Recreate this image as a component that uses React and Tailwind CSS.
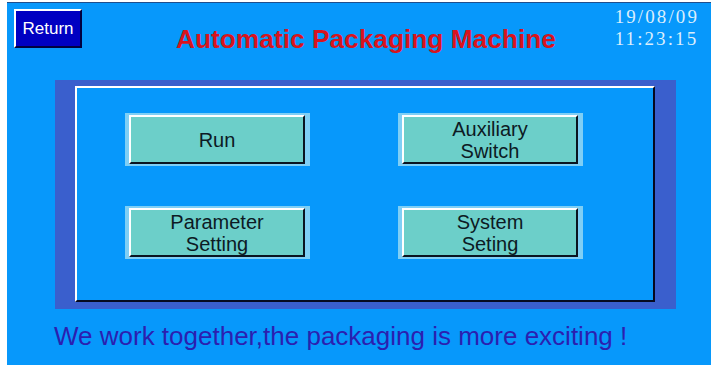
const ARIAL = { fontFamily: '"Liberation Sans", Arial, sans-serif' }

function PanelButton({ lines }) {
  return (
    <div className="w-[185px] h-[53px] bg-[#7fcff5] pl-[4px] pt-[2px] pr-[5px] pb-[2px]">
      <div className="w-full h-full bg-[#6ccfc9] border-t-2 border-l-2 border-t-white border-l-white border-b-2 border-r-2 border-b-[#0a1420] border-r-[#0a1420] flex flex-col items-center justify-center text-[20px] leading-[22px] text-[#0d1a24]">
        {lines.map(l => (
          <span key={l}>{l}</span>
        ))}
      </div>
    </div>
  )
}

export default function App() {
  return (
    <div className="w-[720px] h-[371px] bg-white pl-[7px] pt-[2px]" style={ARIAL}>
      <div className="w-[704px] h-[363px] bg-[#0798fb] border-t border-[#1f4e8c]">
        {/* header */}
        <div className="flex items-start h-[77px]">
          <div className="ml-[7px] mt-[6px] w-[68px] h-[39px] bg-[#0000c2] border-t-2 border-l-2 border-t-white border-l-white border-b-2 border-r-2 border-b-[#000040] border-r-[#000040] flex items-center justify-center text-white text-[17px]">
            Return
          </div>
          <div className="ml-[94px] mt-[21px] text-[26.3px] leading-[30px] font-bold text-[#d8141e]">
            Automatic Packaging Machine
          </div>
          <div
            className="ml-auto mr-[12px] mt-[3px] text-[#dbeefc] text-[19px] leading-[22px] tracking-[2.1px]"
            style={{ fontFamily: '"Liberation Serif", "Times New Roman", serif' }}
          >
            <div>19/08/09</div>
            <div>11:23:15</div>
          </div>
        </div>

        {/* main frame */}
        <div className="ml-[48px] w-[621px] h-[229px] bg-[#3a5fcd] pl-[20px] pt-[6px]">
          <div className="w-[580px] h-[216px] bg-[#0798fb] border-t-2 border-l-2 border-t-white border-l-white border-b-2 border-r-2 border-b-[#050a20] border-r-[#050a20] pl-[48px] pt-[25px]">
            <div className="grid grid-cols-[185px_185px] gap-x-[88px] gap-y-[40px]">
              <PanelButton lines={['Run']} />
              <PanelButton lines={['Auxiliary', 'Switch']} />
              <PanelButton lines={['Parameter', 'Setting']} />
              <PanelButton lines={['System', 'Seting']} />
            </div>
          </div>
        </div>

        <div className="ml-[47px] mt-[12px] text-[26px] leading-[30px] text-[#2b1fb0]">
          We work together,the packaging is more exciting !
        </div>
      </div>
    </div>
  )
}
